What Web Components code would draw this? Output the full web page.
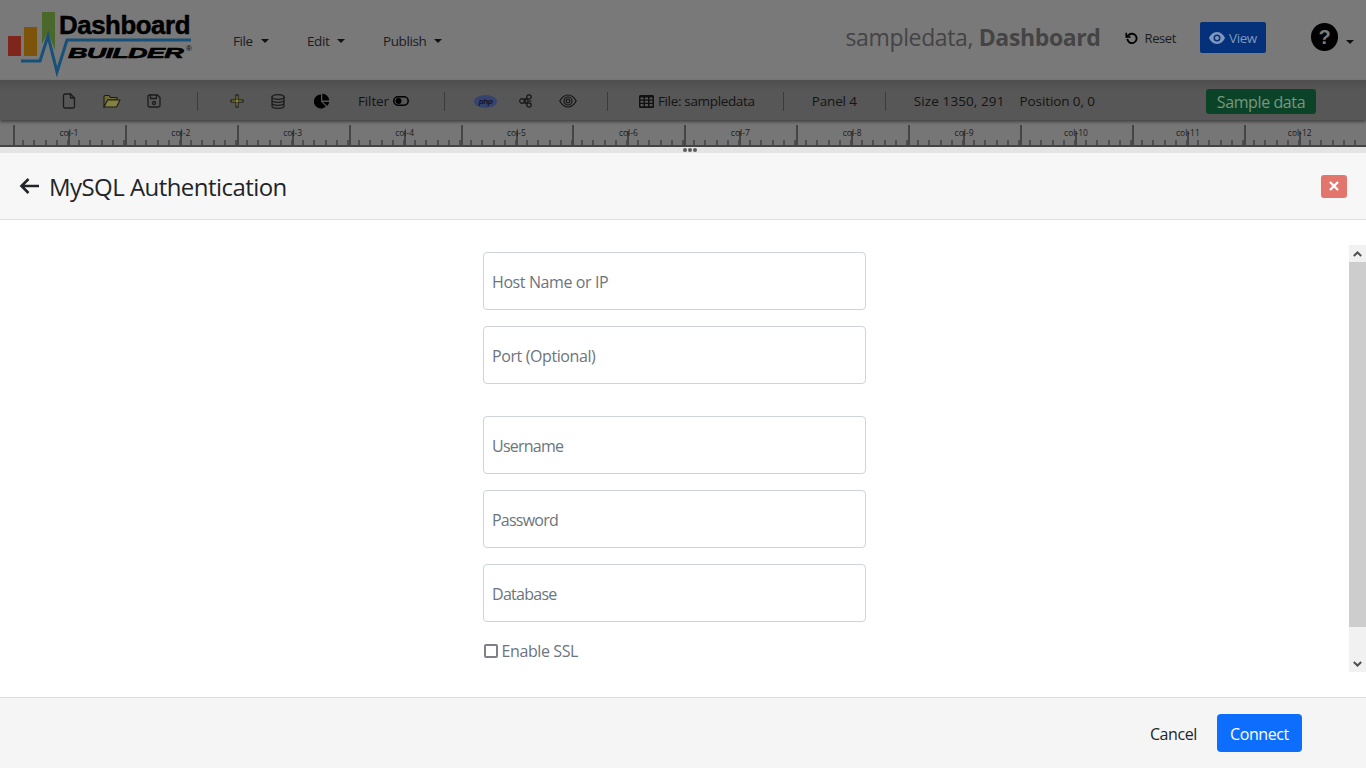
<!DOCTYPE html>
<html><head><meta charset="utf-8">
<style>
html,body{margin:0;padding:0;height:768px;overflow:hidden;background:#fff;font-family:"Open Sans","Liberation Sans",sans-serif;}
body{display:flex;flex-direction:column;font-size:16px;letter-spacing:-.025em}
</style></head><body>
<dash-header></dash-header>
<dash-toolbar></dash-toolbar>
<dash-ruler></dash-ruler>
<drag-strip></drag-strip>
<auth-panel>
  <form-field style="margin-top:7px">Host Name or IP</form-field>
  <form-field>Port (Optional)</form-field>
  <form-field style="margin-top:16px;letter-spacing:-.048em">Username</form-field>
  <form-field style="letter-spacing:-.048em">Password</form-field>
  <form-field style="letter-spacing:-.045em">Database</form-field>
  <check-line>Enable SSL</check-line>
</auth-panel>
<script>
function el(name,css,html,setup){
  customElements.define(name,class extends HTMLElement{
    constructor(){super();const s=this.attachShadow({mode:'open'});s.innerHTML='<style>'+css+'</style>'+html;if(setup)setup(s,this);}
  });
}
const ic='fill="none" stroke="#1c1c1c" stroke-width="1.3" stroke-linejoin="round" stroke-linecap="round"';
el('nav-menu',`:host{display:block;font-size:13.5px;color:#1c1c1c;line-height:18px}
 i{display:inline-block;width:0;height:0;border:4px solid transparent;border-top-color:#111;border-bottom:0;margin-left:8px;vertical-align:3px}`,`<slot></slot><i></i>`);
el('dash-header',`:host{display:flex;align-items:flex-start;height:80px;background:#797979;flex:none;color:#1c1c1c;box-sizing:border-box;position:relative}
 svg{display:block}
 .logo{width:200px;height:80px;flex:none}
 nav{display:flex;margin:32px 0 0 33px}
 nav-menu:nth-child(1){width:74px} nav-menu:nth-child(2){width:76px}
 .title{margin:22px 0 0 auto;font-size:23px;line-height:30px;color:#444;white-space:nowrap;letter-spacing:-.016em}
 .title b{font-weight:700}
 .reset{display:flex;align-items:center;gap:6px;margin:29px 0 0 23px;font-size:13px;line-height:18px}
 .view{display:flex;align-items:center;gap:4px;box-sizing:border-box;margin:22px 0 0 24px;width:66px;height:31px;background:#043179;border-radius:2px;color:#7f97bd;font-size:13.5px;padding-left:9px}
 .help{margin:23px 0 0 45px;width:27px;height:28px;border-radius:50%;background:#000;color:#7c7c7c;font:700 20px/28px "Liberation Sans",sans-serif;text-align:center;letter-spacing:0;flex:none}
 .caret{width:0;height:0;border:4px solid transparent;border-top-color:#111;border-bottom:0;margin:40px 12px 0 8px}`,
`<svg class="logo" viewBox="0 0 200 80">
 <rect x="8" y="36" width="13" height="20" fill="#7f261c"/>
 <rect x="24" y="27" width="13" height="29" fill="#7c540a"/>
 <path d="M42 12h13v38l-7-18-6 12z" fill="#4a6829"/>
 <polyline points="21,61 40,61 48,36 57,72 67,40 191,40" fill="none" stroke="#175078" stroke-width="3"/>
 <text x="59" y="34" font-family="Liberation Sans" font-weight="700" font-size="26" textLength="131" lengthAdjust="spacingAndGlyphs" fill="#000" stroke="#000" stroke-width=".5">Dashboard</text>
 <text x="68" y="58" font-family="Liberation Sans" font-weight="700" font-style="italic" font-size="15" textLength="115" lengthAdjust="spacingAndGlyphs" fill="#000" stroke="#000" stroke-width=".6">BUILDER</text>
 <text x="186" y="51" font-family="Liberation Sans" font-size="8" fill="#000">®</text>
</svg>
<nav><nav-menu>File</nav-menu><nav-menu>Edit</nav-menu><nav-menu>Publish</nav-menu></nav>
<div class="title">sampledata, <b>Dashboard</b></div>
<div class="reset"><svg width="15" height="15" viewBox="0 0 16 16" fill="none" stroke="#000" stroke-width="2"><path d="M3.5 8.500a5 5 0 1 0 1.600-4.300L2.600 6"/><path d="M2.400 1.800V6.400H7" stroke-width="1.700"/></svg>Reset</div>
<div class="view"><svg width="16" height="12" viewBox="0 0 16 12"><path fill-rule="evenodd" d="M8 0c4 0 7 3.500 8 6-1 2.500-4 6-8 6S1 8.500 0 6c1-2.500 4-6 8-6zm0 2.500a3.500 3.500 0 1 0 0 7 3.500 3.500 0 0 0 0-7zm0 1.500a2 2 0 1 1 0 4 2 2 0 0 1 0-4z" fill="#7f97bd"/></svg>View</div>
<div class="help">?</div><div class="caret"></div>`);
el('tool-sep',`:host{display:block;width:1px;height:19px;background:#3c3c3c;flex:none}`,``);
el('dash-toolbar',`:host{display:flex;align-items:center;height:40px;background:linear-gradient(#4e4e4e,#575757 25%,#575757);flex:none;box-shadow:0 2px 3px #444;position:relative;font-size:13.5px;color:#141414;white-space:nowrap;box-sizing:border-box;padding:2px 0 0 62px}
 svg{display:block;flex:none}
 .t{display:flex;align-items:center;gap:4px;flex:none}
 .s{height:25px;box-sizing:border-box;margin-left:auto;margin-right:50px;width:110px;background:#0b4328;border-radius:3px;color:#78977f;font-size:16px;line-height:26px;text-align:center;margin-top:1px;flex:none}`,
`<svg style="margin-right:27px" width="14" height="16" viewBox="0 0 14 16" ${ic}><path d="M1.500 2.500a1.500 1.500 0 0 1 1.500-1.500h5.500l4 4v8.500a1.500 1.500 0 0 1-1.500 1.500H3a1.500 1.500 0 0 1-1.500-1.500z"/><path d="M8.500 1v4h4"/></svg>
<svg style="margin-right:26px" width="18" height="14" viewBox="0 0 18 14"><path d="M1 13V2.500A1 1 0 0 1 2 1.500h4l1.500 2H14v2.500H5L1 13z" fill="#6f6c33" stroke="#1c1c1c" stroke-width="1.100"/><path d="M1 13l3.500-7H17l-3.500 7z" fill="#858240" stroke="#1c1c1c" stroke-width="1.100" stroke-linejoin="round"/></svg>
<svg style="margin-right:36px" width="14" height="14" viewBox="0 0 14 14" ${ic}><path d="M1 2.500A1.500 1.500 0 0 1 2.500 1h8L13 3.500v8a1.500 1.500 0 0 1-1.500 1.500h-9A1.500 1.500 0 0 1 1 11.500z"/><path d="M3.500 1v3.500h6V1"/><circle cx="7" cy="9" r="1.500"/></svg>
<tool-sep style="margin-right:32px"></tool-sep>
<svg style="margin-right:27px" width="14" height="14" viewBox="0 0 14 14"><path d="M7 .5v13M.5 7h13" stroke="#111" stroke-width="3"/><path d="M7 1.500v11M1.500 7h11" stroke="#a8a63f" stroke-width="1"/></svg>
<svg style="margin-right:29px" width="14" height="15" viewBox="0 0 14 15" ${ic}><ellipse cx="7" cy="3" rx="6" ry="2.300"/><path d="M1 3v9c0 1.300 2.700 2.300 6 2.300s6-1 6-2.300V3M1 6c0 1.300 2.700 2.300 6 2.300S13 7.300 13 6M1 9c0 1.300 2.700 2.300 6 2.300S13 10.300 13 9"/></svg>
<svg style="margin-right:28px" width="16" height="16" viewBox="0 0 16 16" fill="#000"><path d="M7 1.500V8.500l4.800 5A7 7 0 1 1 7 1.500z"/><path d="M8.300 .8a7 7 0 0 1 6.900 6.700H8.300z"/><path d="M9 9h6.200a7 7 0 0 1-2 4z"/></svg>
<span class="t" style="letter-spacing:-.01em">Filter<svg width="16" height="10" viewBox="0 0 16 10"><rect x=".8" y=".8" width="14.400" height="8.400" rx="4.200" fill="none" stroke="#000" stroke-width="1.500"/><circle cx="5.500" cy="5" r="3" fill="#000"/></svg></span>
<tool-sep style="margin:0 29px 0 35px"></tool-sep>
<svg style="margin-right:22px" width="23" height="13" viewBox="0 0 23 13"><ellipse cx="11.500" cy="6.500" rx="11.500" ry="6.500" fill="#36436f"/><text x="11.500" y="9" text-anchor="middle" font-family="Liberation Sans" font-style="italic" font-weight="700" font-size="8" fill="#10142a">php</text></svg>
<svg style="margin-right:26px" width="14" height="14" viewBox="0 0 14 14" fill="none" stroke="#161616" stroke-width="1.200"><circle cx="3" cy="7" r="2.300"/><circle cx="10" cy="3" r="2.200"/><circle cx="10" cy="11" r="2.200"/><circle cx="7.500" cy="7" r="1.500"/><path d="M5 5.800 8 3.800M5 8.200l3 2M9 7h3.500"/></svg>
<svg style="margin-right:30px" width="18" height="14" viewBox="0 0 18 14" fill="none" stroke="#161616" stroke-width="1.200"><path d="M.8 7C3 3 6 1 9 1s6 2 8.200 6C15 11 12 13 9 13S3 11 .8 7z"/><circle cx="9" cy="7" r="4"/><circle cx="9" cy="7" r="1.800"/></svg>
<tool-sep style="margin-right:31px"></tool-sep>
<span class="t" style="margin-right:28px;letter-spacing:-.025em"><svg width="15" height="13" viewBox="0 0 15 13"><path fill-rule="evenodd" fill="#111" d="M1.500 0h12A1.500 1.500 0 0 1 15 1.500v10a1.500 1.500 0 0 1-1.500 1.500h-12A1.500 1.500 0 0 1 0 11.500v-10A1.500 1.500 0 0 1 1.500 0zM1.500 2.500v2h3v-2zm4.500 0v2h3v-2zm4.500 0v2h3v-2zM1.500 5.800v2h3v-2zm4.500 0v2h3v-2zm4.500 0v2h3v-2zM1.500 9v2.200h3V9zM6 9v2.200h3V9zm4.500 0v2.200h3V9z"/></svg>File: sampledata</span>
<tool-sep style="margin-right:28px"></tool-sep>
<span style="margin-right:28px;letter-spacing:-.01em">Panel 4</span>
<tool-sep style="margin-right:28px"></tool-sep>
<span style="margin-right:15px;letter-spacing:.1px">Size 1350, 291</span>
<span style="letter-spacing:-.1px">Position 0, 0</span>
<div class="s">Sample data</div>`);
el('ruler-col',`:host{display:block;flex:0 0 111.9px;height:100%;position:relative;box-sizing:border-box;
   background:
    linear-gradient(#454545,#454545) 0 bottom/2px 100% no-repeat,
    linear-gradient(#454545,#454545) 55px bottom/2px 14px no-repeat,
    repeating-linear-gradient(90deg,transparent 0 9.190px,#4f4f4f 9.190px 11.190px) 0 bottom/100% 5px no-repeat}
 span{position:absolute;left:0;right:0;top:2px;text-align:center;font-size:8.500px;line-height:11px;color:#1c1c1c;letter-spacing:0}`,`<span><slot></slot></span>`);
el('dash-ruler',`:host{display:flex;height:27px;background:#767676;flex:none;box-sizing:border-box;padding:5px 0 0 13px;border-bottom:2px solid #444;overflow:hidden}`,
`<ruler-col>col-1</ruler-col><ruler-col>col-2</ruler-col><ruler-col>col-3</ruler-col><ruler-col>col-4</ruler-col><ruler-col>col-5</ruler-col><ruler-col>col-6</ruler-col><ruler-col>col-7</ruler-col><ruler-col>col-8</ruler-col><ruler-col>col-9</ruler-col><ruler-col>col-10</ruler-col><ruler-col>col-11</ruler-col><ruler-col>col-12</ruler-col>`);
el('drag-strip',`:host{display:flex;justify-content:center;gap:1px;align-items:center;height:6px;background:#e4e4e4;flex:none;box-sizing:border-box;padding-left:14px}
 i{width:4px;height:4px;border-radius:50%;background:#5a5a5a}`,`<i></i><i></i><i></i>`);
el('form-field',`:host{display:flex;align-items:center;box-sizing:border-box;height:58px;border:1px solid #ced4da;border-radius:4px;background:#fff;padding:1px 8px 0;color:#6c757d;margin-bottom:16px}`,`<slot></slot>`);
el('check-line',`:host{display:flex;align-items:center;gap:4px;color:#6c757d;margin-top:-2px;height:30px}
 i{box-sizing:border-box;width:14px;height:14px;border:2px solid #80808c;border-radius:2px;margin-left:.5px;background:#fff}`,`<i></i><slot></slot>`);
el('auth-panel',`:host{display:flex;flex-direction:column;flex:1;min-height:0}
 header{display:flex;align-items:center;height:67px;box-sizing:border-box;background:#f7f7f7;border-bottom:1px solid #dedede;padding:0 19px;flex:none}
 h1{margin:2px 0 0 9px;font-size:24px;font-weight:400;color:#212529;line-height:30px;letter-spacing:-.023em}
 .x{margin-left:auto;width:26px;height:23px;background:#e2766c;border-radius:3px;display:flex;align-items:center;justify-content:center}
 main{flex:1;display:flex;min-height:0;position:relative}
 .form{flex:1;display:flex;justify-content:center;padding-top:25px}
 .col{width:383px;display:flex;flex-direction:column}
 .bar{width:17px;margin:25px 0 25px;display:flex;flex-direction:column;background:#f1f1f1;flex:none}
 .bar .a{height:17px;display:flex;align-items:center;justify-content:center;flex:none}
 .bar .th{height:365px;background:#cdcdcd;flex:none}
 .bar .sp{flex:1}
 footer{height:71px;flex:none;box-sizing:border-box;background:#f5f5f5;border-top:1px solid #dedede;display:flex;align-items:center;justify-content:flex-end;padding:0 64px 0 0;gap:21px}
 .c{color:#212529;padding-top:2px;margin-right:-1px}
 .b{width:85px;height:38px;background:#0d6efd;border-radius:4px;color:#fff;display:flex;align-items:center;justify-content:center;padding-top:1px;box-sizing:border-box}`,
`<header><svg width="21" height="18" viewBox="0 0 21 18" fill="none" stroke="#212529" stroke-width="2.600"><path d="M20 9H2.500M9.500 2 2.500 9l7 7"/></svg><h1>MySQL Authentication</h1><div class="x"><svg width="10" height="10" viewBox="0 0 10 10" stroke="#fff" stroke-width="2.400"><path d="M1 1l8 8M9 1l-8 8"/></svg></div></header>
<main><div class="form"><div class="col"><slot></slot></div></div>
<div class="bar"><div class="a"><svg width="9" height="6" viewBox="0 0 9 6" fill="none" stroke="#505050" stroke-width="2"><path d="M.8 5 4.500 1.500 8.200 5"/></svg></div><div class="th"></div><div class="sp"></div><div class="a"><svg width="9" height="6" viewBox="0 0 9 6" fill="none" stroke="#505050" stroke-width="2"><path d="M.8 1l3.700 3.500L8.200 1"/></svg></div></div></main>
<footer><span class="c">Cancel</span><span class="b">Connect</span></footer>`);
</script>
</body></html>
